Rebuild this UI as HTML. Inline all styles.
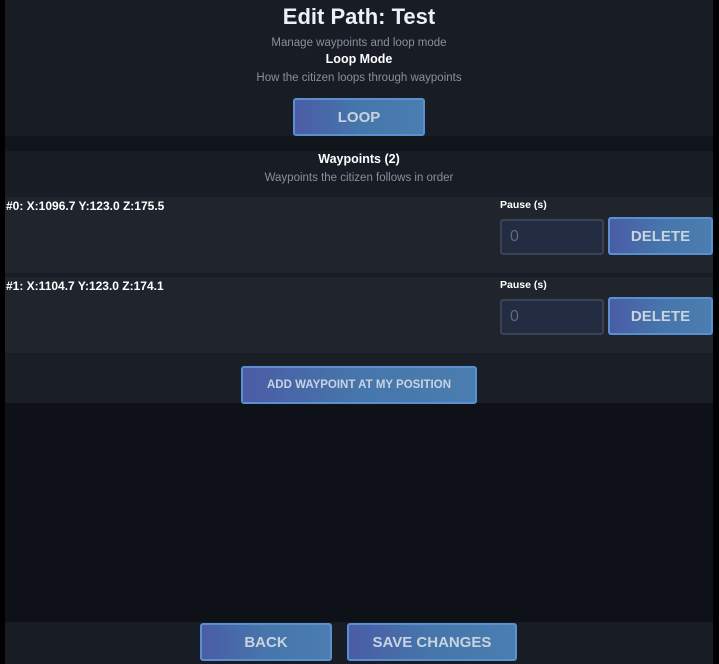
<!DOCTYPE html><html><head><style>
body{margin:0;width:719px;height:664px;background:#000;font-family:"Liberation Sans",sans-serif;overflow:hidden;position:relative}
.p{position:absolute;left:5px;width:708px}
.c{text-align:center;position:absolute;width:100%}
.btn{position:absolute;box-sizing:border-box;border:2px solid #5a8fd0;border-radius:3px;background:linear-gradient(90deg,#4a5ca6,#4676ab 50%,#4a7db0);color:#c9d3e0;font-weight:bold;display:flex;align-items:center;justify-content:center}
.in{position:absolute;box-sizing:border-box;border:2px solid #3a4255;border-radius:3px;background:#232c40;color:#5e6a80;font-size:16px;padding-left:8px;display:flex;align-items:center}
.t{position:absolute;color:#fff;font-weight:bold;font-size:12px}
</style></head><body>
<div class="p" style="top:0;height:136px;background:#181c25">
<div class="c" style="top:4px;color:#eef0f4;font-size:22px;font-weight:bold">Edit Path: Test</div>
<div class="c" style="top:37px;color:#8a909a;font-size:11.5px">Manage waypoints and loop mode</div>
<div class="c" style="top:52px;color:#fff;font-size:12.5px;font-weight:bold">Loop Mode</div>
<div class="c" style="top:72px;color:#8a909a;font-size:11.5px">How the citizen loops through waypoints</div>
</div>
<div class="p" style="top:136px;height:15px;background:#10141b"></div>
<div class="p" style="top:151px;height:46px;background:#181c25">
<div class="c" style="top:1px;color:#fff;font-size:12.5px;font-weight:bold">Waypoints (2)</div>
<div class="c" style="top:21px;color:#8a909a;font-size:11.5px">Waypoints the citizen follows in order</div>
</div>
<div class="p" style="top:197px;height:76px;background:#20242d"></div>
<div class="p" style="top:273px;height:4px;background:#181c25"></div>
<div class="p" style="top:277px;height:76px;background:#20242d"></div>
<div class="p" style="top:353px;height:50px;background:#1a1e27"></div>
<div class="p" style="top:403px;height:219px;background:#0e1118"></div>
<div class="p" style="top:622px;height:42px;background:#181c25"></div>
<div class="btn" style="left:293px;top:98px;width:132px;height:38px;font-size:15px">LOOP</div>
<div class="t" style="left:6px;top:199px">#0: X:1096.7 Y:123.0 Z:175.5</div>
<div class="t" style="left:500px;top:199px;font-size:10.5px">Pause (s)</div>
<div class="in" style="left:500px;top:219px;width:104px;height:36px">0</div>
<div class="btn" style="left:608px;top:217px;width:105px;height:38px;font-size:15px">DELETE</div>
<div class="t" style="left:6px;top:279px">#1: X:1104.7 Y:123.0 Z:174.1</div>
<div class="t" style="left:500px;top:279px;font-size:10.5px">Pause (s)</div>
<div class="in" style="left:500px;top:299px;width:104px;height:36px">0</div>
<div class="btn" style="left:608px;top:297px;width:105px;height:38px;font-size:15px">DELETE</div>
<div class="btn" style="left:241px;top:366px;width:236px;height:38px;font-size:11.5px">ADD WAYPOINT AT MY POSITION</div>
<div class="btn" style="left:200px;top:623px;width:132px;height:38px;font-size:15px">BACK</div>
<div class="btn" style="left:347px;top:623px;width:170px;height:38px;font-size:15px">SAVE CHANGES</div>
</body></html>
